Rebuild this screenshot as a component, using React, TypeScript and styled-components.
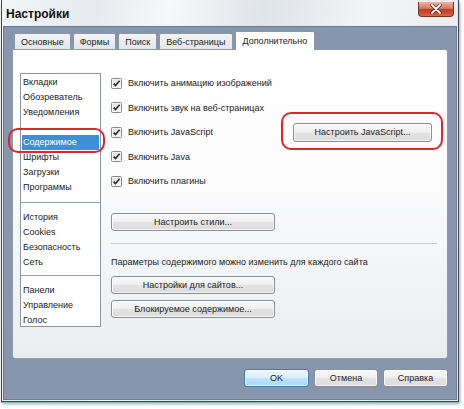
import React from "react";
import styled, { createGlobalStyle } from "styled-components";

const GlobalStyle = createGlobalStyle`
    html, body {
        margin: 0;
        padding: 0;
        background: #fff;
    }
    body {
        font-family: "Liberation Sans", Arial, sans-serif;
        font-size: 9px;
        color: #1b1b1b;
    }
`;

const leftItems: (string | null)[][] = [
    ["Вкладки", "Обозреватель", "Уведомления", null, "Содержимое", "Шрифты", "Загрузки", "Программы"],
    ["История", "Cookies", "Безопасность", "Сеть"],
    ["Панели", "Управление", "Голос"],
];

const tabs = ["Основные", "Формы", "Поиск", "Веб-страницы", "Дополнительно"];

const options = [
    "Включить анимацию изображений",
    "Включить звук на веб-страницах",
    "Включить JavaScript",
    "Включить Java",
    "Включить плагины",
];

const CheckIcon = () => (
    <svg width="11" height="11" viewBox="0 0 11 11">
        <defs>
            <linearGradient id="cb" x1="0" y1="0" x2="1" y2="1">
                <stop offset="0" stopColor="#dcdcdc" />
                <stop offset="1" stopColor="#fafafa" />
            </linearGradient>
        </defs>
        <rect x="0.5" y="0.5" width="10" height="10" rx="1" fill="#f4f4f4" stroke="#8a8a8a" />
        <rect x="2" y="2" width="7" height="7" fill="url(#cb)" />
        <path d="M2.6 5.6 L4.5 7.6 L8.6 2.8" fill="none" stroke="#262c33" strokeWidth="1.6" />
    </svg>
);

const CloseIcon = () => (
    <svg width="12" height="10" viewBox="0 0 12 10">
        <path d="M2 1 L10 9 M10 1 L2 9" stroke="#5a1a10" strokeWidth="3.2" strokeLinecap="round" />
        <path d="M2 1 L10 9 M10 1 L2 9" stroke="#fff" strokeWidth="1.8" strokeLinecap="round" />
    </svg>
);

export default function App() {
    return (
        <Page>
            <GlobalStyle />
            <Window>
                <TitleBar>
                    <Title>Настройки</Title>
                    <CloseButton>
                        <CloseIcon />
                    </CloseButton>
                </TitleBar>
                <Body>
                    <TabRow>
                        {tabs.map((t, i) => (
                            <Tab key={t} $active={i === tabs.length - 1}>
                                {t}
                            </Tab>
                        ))}
                    </TabRow>
                    <Panel>
                        <ListBox>
                            {leftItems.map((group, gi) => (
                                <ListGroup key={gi} $first={gi === 0}>
                                    {group.map((item, ii) => (
                                        <ListItem key={ii} $selected={item === "Содержимое"}>
                                            {item ?? ""}
                                        </ListItem>
                                    ))}
                                </ListGroup>
                            ))}
                        </ListBox>
                        <Content>
                            {options.map((o, i) => (
                                <CheckRow key={o}>
                                    <CheckIcon />
                                    <CheckLabel>{o}</CheckLabel>
                                    {i === 2 && <Button $width={139} $height={19} $push>Настроить JavaScript...</Button>}
                                </CheckRow>
                            ))}
                            <Button $width={164} $top={19}>Настроить стили...</Button>
                            <Divider />
                            <Note>Параметры содержимого можно изменить для каждого сайта</Note>
                            <Button $width={164} $top={9}>Настройки для сайтов...</Button>
                            <Button $width={164} $top={6}>Блокируемое содержимое...</Button>
                        </Content>
                    </Panel>
                    <Footer>
                        <Button $width={65} $default>OK</Button>
                        <Button $width={64}>Отмена</Button>
                        <Button $width={65}>Справка</Button>
                    </Footer>
                </Body>
            </Window>
            <Marker $x={8} $y={128} $w={97} $h={25} />
            <Marker $x={281} $y={112} $w={162} $h={38} />
        </Page>
    );
}

const Page = styled.div`
    position: relative;
    width: 464px;
    height: 409px;
    overflow: hidden;
`;

const Window = styled.div`
    margin-left: 1px;
    width: 456px;
    height: 401px;
    border: 1px solid #3d4652;
    border-top: none;
    background: linear-gradient(100deg, #f3f5f7 0%, #e6eaee 18%, #f7f8f9 32%, #dfe4e9 50%, #f2f4f6 70%, #e3e7eb 100%);
    box-shadow: 0 1px 0 #7fc2b5, 1px 2px 3px rgba(0, 0, 0, 0.35);
    display: flex;
    flex-direction: column;
`;

const TitleBar = styled.div`
    height: 26px;
    display: flex;
    align-items: flex-start;
    padding: 0 4px 0 4px;
    flex-shrink: 0;
`;

const Title = styled.div`
    margin-top: 7px;
    font-family: "Liberation Sans", Arial, sans-serif;
    font-weight: bold;
    font-size: 12px;
    color: #111;
`;

const CloseButton = styled.div`
    margin-left: auto;
    margin-top: 2px;
    width: 34px;
    height: 14px;
    border: 1px solid #7a3326;
    border-top: none;
    border-radius: 0 0 4px 4px;
    background: linear-gradient(#eab4a6 0%, #d77a63 45%, #c0391f 55%, #d8664a 100%);
    display: flex;
    align-items: center;
    justify-content: center;
`;

const Body = styled.div`
    flex: 1;
    margin: 0 1px 1px 1px;
    background: #8796ad;
    border: 1px solid #6b7a8f;
    padding: 4px 8px 0 8px;
    display: flex;
    flex-direction: column;
`;

const TabRow = styled.div`
    display: flex;
    align-items: flex-end;
    gap: 2px;
    padding-left: 2px;
    margin-bottom: -1px;
    position: relative;
    z-index: 1;
`;

const Tab = styled.div<{ $active?: boolean }>`
    height: ${(p) => (p.$active ? 19 : 17)}px;
    box-sizing: border-box;
    padding: ${(p) => (p.$active ? "0 7px 1px 7px" : "0 6px")};
    display: flex;
    align-items: center;
    justify-content: center;
    font-size: 9px;
    color: #222;
    border: 1px solid #8a97a8;
    border-bottom: ${(p) => (p.$active ? "none" : "1px solid #8a97a8")};
    border-radius: 2px 2px 0 0;
    background: ${(p) => (p.$active ? "#fff" : "linear-gradient(#f3f4f6, #e4e7eb)")};
`;

const Panel = styled.div`
    height: 310px;
    box-sizing: border-box;
    border: 1px solid #8e9bab;
    border-radius: 0 3px 3px 3px;
    background: linear-gradient(#ffffff 0%, #fbfbfc 45%, #eaedf0 100%);
    display: flex;
    align-items: flex-start;
    padding: 23px 10px 0 7px;
`;

const ListBox = styled.div`
    width: 81px;
    height: 254px;
    box-sizing: border-box;
    border: 1px solid #8d949c;
    background: #fff;
    flex-shrink: 0;
`;

const ListGroup = styled.div<{ $first?: boolean }>`
    padding: ${(p) => (p.$first ? "1px 0 7px" : "7px 0 5px")};
    border-top: ${(p) => (p.$first ? "none" : "1px solid #9aa0a6")};
`;

const ListItem = styled.div<{ $selected?: boolean }>`
    height: 15px;
    line-height: 15px;
    margin: 0 1px;
    padding-left: 1px;
    white-space: nowrap;
    font-size: 9px;
    color: ${(p) => (p.$selected ? "#fff" : "#1b1b1b")};
    background: ${(p) => (p.$selected ? "#3d8fd6" : "transparent")};
`;

const Content = styled.div`
    flex: 1;
    margin-left: 10px;
    margin-top: -2px;
    display: flex;
    flex-direction: column;
    align-items: flex-start;
`;

const CheckRow = styled.div`
    height: 24.5px;
    align-self: stretch;
    display: flex;
    align-items: center;
`;

const CheckLabel = styled.span`
    margin-left: 6px;
    font-size: 9px;
    white-space: nowrap;
`;

const Button = styled.div<{ $width: number; $height?: number; $top?: number; $push?: boolean; $default?: boolean }>`
    width: ${(p) => p.$width}px;
    height: ${(p) => p.$height ?? 18}px;
    box-sizing: border-box;
    margin-top: ${(p) => p.$top ?? 0}px;
    ${(p) => (p.$push ? "margin-left: auto; margin-right: 5px;" : "")}
    display: flex;
    align-items: center;
    justify-content: center;
    font-size: 9px;
    color: #1b1b1b;
    border: 1px solid ${(p) => (p.$default ? "#3c7fb1" : "#8c8f93")};
    border-radius: 3px;
    background: ${(p) =>
        p.$default
            ? "linear-gradient(#ecf7fd 0%, #dcf0fb 48%, #bfe3f7 52%, #a9d8f3 100%)"
            : "linear-gradient(#f8f8f8 0%, #f0f0f0 48%, #e3e3e3 52%, #dcdcdc 100%)"};
    box-shadow: inset 0 0 0 1px rgba(255, 255, 255, 0.7);
    white-space: nowrap;
`;

const Divider = styled.div`
    align-self: stretch;
    margin: 12px 0 0 0;
    height: 1px;
    background: #c5cad0;
`;

const Note = styled.div`
    margin-top: 13px;
    font-size: 9px;
    white-space: nowrap;
`;

const Footer = styled.div`
    display: flex;
    justify-content: flex-end;
    gap: 5px;
    margin-top: 10px;
`;

const Marker = styled.div<{ $x: number; $y: number; $w: number; $h: number }>`
    position: absolute;
    left: ${(p) => p.$x}px;
    top: ${(p) => p.$y}px;
    width: ${(p) => p.$w}px;
    height: ${(p) => p.$h}px;
    box-sizing: border-box;
    border: 2px solid #e0242c;
    border-radius: 10px;
    pointer-events: none;
`;
